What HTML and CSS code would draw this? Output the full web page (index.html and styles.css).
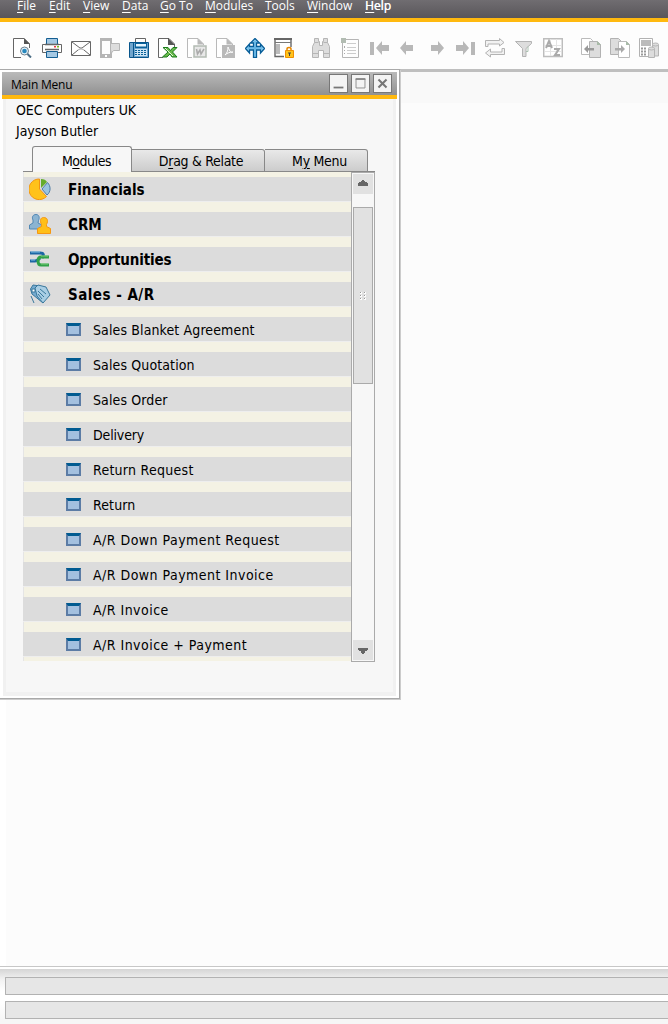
FILE: index.html
```html
<!DOCTYPE html>
<html lang="en">
<head>
<meta charset="utf-8">
<title>Main Menu</title>
<link rel="stylesheet" href="styles.css">
</head>
<body>
<nav class="menubar"><span><u>F</u>ile</span><span><u>E</u>dit</span><span><u>V</u>iew</span><span><u>D</u>ata</span><span><u>G</u>o To</span><span><u>M</u>odules</span><span><u>T</u>ools</span><span><u>W</u>indow</span><span class="help"><u>H</u>elp</span></nav>
<div class="toolbar">
  <div class="group">
    <svg viewBox="0 0 20 20"><path d="M8 19.500H.5V.5H11l5.500 5.500V10" fill="#fff" stroke="#666"/><path d="M11 0l6 6h-6z" fill="#555"/><circle cx="11.500" cy="13" r="4" fill="#e4f1f8" stroke="#6d7f8c"/><circle cx="11.500" cy="13" r="2.300" fill="#2687bd"/><path d="M14.500 16l3.500 3.500" stroke="#4b6d85" stroke-width="2"/></svg>
    <svg viewBox="0 0 20 20"><path d="M4.500.5h11V7h-11z" fill="#a4c8e3" stroke="#145e92"/><path d="M.5 6.500h19v8H.5z" fill="#fff" stroke="#666"/><path d="M3 6.500h14M3 11.500h14" stroke="#666" stroke-width="1.500"/><path d="M12 8h2v1.500h-2z" fill="#e34"/><path d="M15 8h2v1.500h-2z" fill="#7b2"/><path d="M4.500 13.500h11v6h-11z" fill="#a4c8e3" stroke="#145e92"/></svg>
    <svg viewBox="0 0 20 20" fill="none" stroke="#666"><path d="M.5 3.500h19v14H.5z" fill="#fff"/><path d="M1 4l8 6h2l8-6M1 17l6-5M19 17l-6-5"/><path d="M7 12l2-1h2l2 1" stroke="#aaa"/></svg>
    <svg viewBox="0 0 20 20"><path d="M1 1h10v18H1z" fill="#fdfdfd" stroke="#b5b5b5" stroke-width="2"/><path d="M0 16h12v4H0zM0 0h12v3H0z" fill="#b5b5b5"/><path d="M5 17h2v2H5z" fill="#fff"/><path d="M10.500 5.500h9v7h-6l-2.500 3v-3h-.5z" fill="#ddd" stroke="#b5b5b5"/></svg>
    <svg viewBox="0 0 20 20"><path d="M6.500.5h10v5h-10z" fill="#fff" stroke="#666"/><path d="M.5 4.500h19v15H.5z" fill="#70a5cd" stroke="#07558c"/><path d="M4.500 4v15" stroke="#07558c"/><path d="M6 5h12v5H6z" fill="#09619a"/><path d="M7 6h10v2.500H7z" fill="#e5f5ff"/><path d="M6 11h12v7H6z" fill="#cce4f4"/><path d="M6 12.500h11M6 14.500h11M6 16.500h11" stroke="#09619a" stroke-dasharray="2 1"/></svg>
    <svg viewBox="0 0 20 20"><path d="M5 19.500H.5V.5H11l5.500 5.500V9" fill="#fff" stroke="#666"/><path d="M10 0l7 7h-7z" fill="#555"/><path d="M5 9.500h5l2.500 3L15 9.500h4l-4.500 4.500 4.500 5h-5l-2-3-3 3H4.500l5.500-5z" fill="#69b84a" stroke="#187c1b"/><path d="M7 10l8 8" stroke="#e4f5d8"/></svg>
    <svg viewBox="0 0 20 20"><path d="M5 19.500H.5V.5H11l5.500 5.500V7" fill="#fff" stroke="#b9b9b9"/><path d="M10.500 0l6.500 6.500h-6.500z" fill="#b9b9b9"/><path d="M7 8h12v11H7z" fill="#e8e8e8" stroke="#b2bbb2" stroke-width="1.500"/><path d="M9.500 11l1 5 2.500-4 1 4 3-5" fill="none" stroke="#aaa" stroke-width="1.500"/></svg>
    <svg viewBox="0 0 20 20"><path d="M5 19.500H.5V.5H11l5.500 5.500V7" fill="#fff" stroke="#b9b9b9"/><path d="M10.500 0l6.500 6.500h-6.500z" fill="#b9b9b9"/><path d="M6 7h13v13H6z" fill="#b9b9b9"/><path d="M12 9c2 5 3 6 5 5-3 0-6 1-8 3 2-2 3-4 3-8z" fill="none" stroke="#fff"/></svg>
    <svg viewBox="0 0 20 20"><path d="M10 .5L14.500 5h-3v3.500h4V6l4 4.500-4 4.500v-3h-4v7.500h-3V12h-4v3l-4-4.500L4.500 6v2.500h4V5h-3z" fill="#8bcdf1" stroke="#075d98" stroke-width="1.300"/><path d="M10 3v15M3 10h14" stroke="#54abe0"/></svg>
    <svg viewBox="0 0 20 20"><path d="M1 1h16v17.500H1z" fill="#fff" stroke="#666" stroke-width="1.400"/><path d="M0 0h18v2H0z" fill="#666"/><path d="M1 4.500h16" stroke="#777"/><path d="M2 6h4v10H2z" fill="#bbb"/><path d="M10 9h10v11H10z" fill="#fdfdfd"/><path d="M13 13v-2c0-2 4-2 4 0v2" fill="none" stroke="#e78700" stroke-width="1.500"/><path d="M11.500 12.500h8v7h-8z" fill="#ffc31b" stroke="#ef8f00"/><path d="M14 15h3M15.500 15v3" stroke="#444"/></svg>
  </div>
  <div class="group">
    <svg viewBox="0 0 20 20" fill="#ddd" stroke="#b5b5b5"><path d="M3.500.5h4v3h1v4h3v-4h1v-3h4v4l2 4v11h-6v-7h-5v7h-6v-11l2-4z"/><path d="M1.500 15.500h6M12.500 15.500h6M3.500 4.500h4M12.500 4.500h4"/></svg>
    <svg viewBox="0 0 20 20"><path d="M2.500 1.500h16v18h-16z" fill="#fdfdfd" stroke="#b5b5b5"/><path d="M1 0h5v5H1z" fill="#b2bcb2"/><path d="M7 5.500h9M7 9.500h9M7 12.500h9M7 15.500h9" stroke="#ccc"/><path d="M4 8h1v2H4zM4 12h1v1H4zM4 15h1v1H4z" fill="#aaa"/></svg>
    <svg viewBox="0 0 20 20" fill="#b8b8b8"><path d="M1 4h4v13H1zM7 10l6-7v4h7v6h-7v4z"/></svg>
    <svg viewBox="0 0 20 20" fill="#b8b8b8"><path d="M2 10l6-7v4h7v6H8v4z"/></svg>
    <svg viewBox="0 0 20 20" fill="#b8b8b8"><path d="M17 10l-6-7v4H4v6h7v4z"/></svg>
    <svg viewBox="0 0 20 20" fill="#b8b8b8"><path d="M13 10L7 3v4H0v6h7v4zM15 4h4v13h-4z"/></svg>
    <svg viewBox="0 0 20 20" fill="#f2f2f2" stroke="#b3b3b3"><path d="M.5 8.500v-6h14v-2l4.500 4-4.500 3.500V6H3v2.500zM19.500 10.500v6h-14v2.500l-5-4 5-4V14H17v-3.500z"/></svg>
    <svg viewBox="0 0 20 20"><path d="M1.500 3.500h16v2l-5.500 5v8H8.500v-8l-7-7z" fill="#ddd" stroke="#b3b3b3"/><path d="M14 8.500v5h-2" fill="none" stroke="#abc1b1"/></svg>
    <svg viewBox="0 0 20 20"><path d="M.7.7h18.600v17.800H.7z" fill="#fff" stroke="#bdbdbd" stroke-width="1.500"/><path d="M2 7.500h16M2 13.500h16M7.500 1v17M13.500 1v17" stroke="#e5e5e5"/><path d="M3 10l3-7 3 7M4 8h5M11 11h5l-4 6h5" fill="none" stroke="#aaa" stroke-width="2"/></svg>
  </div>
  <div class="group">
    <svg viewBox="0 0 20 20"><path d="M.5.5h9l2 2v14H.5z" fill="#fff" stroke="#bbb"/><path d="M8.500 3.500h8l3 3v13h-11z" fill="#ddd" stroke="#b2b2b2"/><path d="M16 3l4 4h-4z" fill="#a8bba8"/><path d="M3 11l4-4v3h6v2.500H7V15z" fill="#999"/></svg>
    <svg viewBox="0 0 20 20"><path d="M.5.5h8l3 3v13H.5z" fill="#ddd" stroke="#b2b2b2"/><path d="M8.500 3.500h8l3 3v13h-11z" fill="#fff" stroke="#bbb"/><path d="M16 3l4 4h-4z" fill="#a8bba8"/><path d="M15 11l-4-4v3H5v2.500h6V15z" fill="#aaa"/></svg>
    <svg viewBox="0 0 20 20"><path d="M.5.5h13v18H.5z" fill="#fff" stroke="#b2b2b2"/><path d="M2 2h10v6H2z" fill="#bbb"/><path d="M2 10.500h6M2 13.500h6M2 16.500h6" stroke="#999" stroke-width="2" stroke-dasharray="2 1"/><g fill="#ddd" stroke="#b5b5b5"><path d="M13.500 7v11h6V7z"/><ellipse cx="16.500" cy="6.500" rx="3" ry="1.500"/><path d="M9.500 11v8.500h6V11z"/><ellipse cx="12.500" cy="10.500" rx="3" ry="1.500"/></g></svg>
  </div>
</div>
<main class="workspace">
  <section class="window">
    <header class="titlebar"><span class="title">Main Menu</span>
      <div class="controls">
        <svg viewBox="0 0 19 19"><path d="M4 14h11" stroke="#777" stroke-width="2"/></svg>
        <svg viewBox="0 0 19 19"><path d="M4.500 4.500h10v10h-10z" fill="none" stroke="#888"/><path d="M4 4.500h11" stroke="#888" stroke-width="2"/></svg>
        <svg viewBox="0 0 19 19"><path d="M5 5l9 9M14 5l-9 9" stroke="#777" stroke-width="2.300"/></svg>
      </div>
    </header>
    <div class="body">
      <p>OEC Computers UK</p>
      <p>Jayson Butler</p>
      <div class="tabs"><div class="tab active">M<u>o</u>dules</div><div class="tab drag">D<u>r</u>ag &amp; Relate</div><div class="tab mine">M<u>y</u> Menu</div></div>
      <div class="panel">
        <ul class="list">
          <li class="module"><svg viewBox="0 0 22 22"><path d="M10.500 1v10l7 7.500A10.300 10.300 0 1 1 10.500 1z" fill="#ffc21b" stroke="#f29412"/><path d="M12 1v9l6-6c-1-2-3-3-6-3z" fill="#65ac2b"/><path d="M18.500 4.500L13 11l5 6c4-3 4-9 .5-12.500z" fill="#9bc4df" stroke="#517ca5"/></svg><span>Financials</span></li>
          <li class="module"><svg viewBox="0 0 22 22"><path d="M7 1.500c3 0 4 3 2.500 6L9 10l4 2v4H.5v-4L4 10V7C2.500 4 4 1.500 7 1.500z" fill="#8bb4d2" stroke="#5389b5"/><path d="M14.500 4.500c4 0 5 3 3 7v2l4 2v5H8.500v-5l4-2v-2c-2-4-1-7 2-7z" fill="#ffbf19" stroke="#f59713"/></svg><span>CRM</span></li>
          <li class="module"><svg viewBox="0 0 22 22" fill="none" stroke-width="3"><path d="M1 5h10c4 0 4 2 2 5M1 13h5c2 0 3-1 5-3" stroke="#1c67a4"/><path d="M20 9h-8c-4 0-4 8 0 8h8" stroke="#31a248"/><path d="M2 4h9M2 12h4" stroke="#80bfe4" stroke-width="1"/><path d="M12 8h7M12 16h7" stroke="#7ccc7d" stroke-width="1"/></svg><span class="tight">Opportunities</span></li>
          <li class="module"><svg viewBox="0 0 22 22" stroke="#39789c"><path d="M1.500 6L4 2l7 1 5 5-2 12L3 11z" fill="#75abd0"/><path d="M6 5l3-3 8 2 4 8-7 8-6-7z" fill="#a9cee4"/><path d="M2 13l3 7M9 8l6 6M11 6l6 5M9 11l4 5" fill="none"/><path d="M3 6h3v3H3z" fill="#fff"/></svg><span class="wide">Sales - A/R</span></li>
          <li><i></i><span>Sales Blanket Agreement</span></li>
          <li><i></i><span>Sales Quotation</span></li>
          <li><i></i><span>Sales Order</span></li>
          <li><i></i><span class="tight">Delivery</span></li>
          <li><i></i><span class="roomy">Return Request</span></li>
          <li><i></i><span>Return</span></li>
          <li><i></i><span class="wide">A/R Down Payment Request</span></li>
          <li><i></i><span class="wide">A/R Down Payment Invoice</span></li>
          <li><i></i><span class="wide">A/R Invoice</span></li>
          <li><i></i><span class="wide">A/R Invoice + Payment</span></li>
        </ul>
        <div class="scrollbar">
          <svg class="arrow" viewBox="0 0 20 20" shape-rendering="crispEdges"><path d="M9 6h2v1h1v1h2v1h1v3H5V9h1V8h2V7h1z" fill="#666"/></svg>
          <div class="thumb"><svg viewBox="0 0 8 10" shape-rendering="crispEdges"><path d="M1 1h2v2H1zM5 1h2v2H5zM1 4h2v2H1zM5 4h2v2H5zM1 7h2v2H1zM5 7h2v2H5z" fill="#fff"/><path d="M1 1h1v1H1zM5 1h1v1H5zM1 4h1v1H1zM5 4h1v1H5zM1 7h1v1H1zM5 7h1v1H5z" fill="#999"/></svg></div>
          <svg class="arrow down" viewBox="0 0 20 20" shape-rendering="crispEdges"><path d="M5 8h10v2h-1v1h-2v2h-1v1H9v-1H8v-2H6v-1H5z" fill="#666"/></svg>
        </div>
      </div>
    </div>
  </section>
</main>
<footer class="status"><div class="field"></div><div class="field"></div></footer>
</body>
</html>
```
FILE: styles.css
```css
* { box-sizing: border-box; }
body { margin: 0; width: 668px; height: 1024px; overflow: hidden; background: #fdfdfd; color: #000; font-family: "DejaVu Sans Condensed", "DejaVu Sans", sans-serif; font-stretch: condensed; display: flex; flex-direction: column; }
svg { display: block; flex: none; }
u { text-decoration-thickness: 1px; text-underline-offset: 2px; }
.menubar { height: 22px; flex: none; border-bottom: 4px solid #ffb90f; background: linear-gradient(#706d71, #59565a); color: #fff; font: 12px/11px "Open Sans", sans-serif; display: grid; grid-template-columns: 32px 34px 39px 38px 45px 60px 42px 58px auto; padding-left: 17px; white-space: nowrap; }
.menubar .help { text-shadow: .3px 0 #fff; }
.toolbar { height: 47px; flex: none; padding: 16px 0 0 13px; display: flex; gap: 17px; background: #fdfdfd; }
.group { display: flex; gap: 9px; }
.group:last-child { margin-left: 1px; }
.group svg { width: 20px; height: 20px; }
.workspace { height: 897px; flex: none; background: linear-gradient(#fff, #fff) left / 6px 100% no-repeat, linear-gradient(#bfbfbf 0 3px, #f9f9f9 3px 34px, #fcfcfc 34px); }
.window { width: 401px; height: 631px; border-top: 1px solid #a9a9a9; border-right: 1px solid #ccc; border-bottom: 1px solid #ccc; padding: 2px 3px 3px 2px; background: #fff; box-shadow: inset -1px -1px #a9a9a9; }
.titlebar { height: 27px; width: 395px; background: linear-gradient(#bababa, #919191); border-bottom: 4px solid #ffb90f; display: flex; justify-content: space-between; padding: 2px 5px 0 9px; }
.title { font: 12px/21px "Open Sans", sans-serif; letter-spacing: -.2px; }
.controls { display: flex; gap: 3px; }
.controls svg { width: 19px; height: 19px; background: #f4f4f4; border: 1px solid #777; }
.body { height: 597px; width: 393px; margin-left: 1px; background: #f7f7f7; border: solid #f1f1f1; border-width: 0 3px 4px 3px; padding: 1px 18px 0 17px; }
p { margin: 0 0 0 -7px; font-size: 14px; line-height: 21px; letter-spacing: -.08px; }
.tabs { height: 26px; width: 352px; margin-top: 4px; display: flex; align-items: flex-end; padding-left: 9px; font-size: 14px; background: linear-gradient(#888, #888) bottom / 100% 1px no-repeat; }
.tab { height: 23px; border: 1px solid #888; border-left: 0; background: linear-gradient(#e9e9e9, #ccc); border-radius: 0 3px 0 0; text-align: center; line-height: 22px; letter-spacing: -.3px; padding-left: 6px; }
.tab.active { width: 100px; height: 26px; border-left: 1px solid #888; border-bottom: 0; border-radius: 3px 3px 0 0; background: #f7f7f7; line-height: 29px; padding-left: 9px; letter-spacing: -.45px; }
.tab.drag { width: 133px; }
.tab.mine { width: 103px; padding-left: 7px; }
.panel { display: flex; height: 490px; width: 352px; }
.list { list-style: none; margin: 0; padding: 5px 0 0; width: 328px; height: 489px; background: linear-gradient(#e5e5e5, #e5e5e5) left / 1px 100% no-repeat #f4f2e4; overflow: hidden; }
li { height: 25px; margin-bottom: 10px; padding-left: 43px; background: #dcdcdc; border-bottom: 1px solid #eee; display: flex; align-items: center; gap: 12px; font-size: 14px; letter-spacing: .12px; white-space: nowrap; }
li span { padding-top: 1px; }
li i { width: 15px; height: 13px; border: 2px solid #5c7ca5; border-top: 3px solid #005b91; background: #a3c0df; }
li.module { padding-left: 6px; gap: 17px; font-weight: bold; font-size: 15px; letter-spacing: 0; }
li.module span { padding-top: 2px; }
li .wide { letter-spacing: .47px; }
li .roomy { letter-spacing: .27px; }
li .tight { letter-spacing: -.15px; }
.module svg { width: 22px; height: 22px; }
.scrollbar { width: 24px; height: 490px; border: 1px solid #aaa; background: #f7f7f7; padding: 1px; display: flex; flex-direction: column; }
.arrow { width: 20px; height: 20px; background: #e1e1e1; }
.thumb { height: 177px; width: 20px; margin-top: 13px; border: 1px solid #aaa; background: #e1e1e1; display: flex; align-items: center; justify-content: center; }
.thumb svg { width: 8px; height: 10px; }
.down { margin-top: auto; }
.status { height: 58px; flex: none; border-top: 1px solid #c7c7c7; background: linear-gradient(#fff 0 2px, #d5d5d5 2px, #f1f1f1 12px, #fff 24px 36px, #f6f6f6 52px); padding: 10px 0 0 5px; }
.field { height: 18px; margin-bottom: 6px; border: 1px solid #b2b2b2; border-right: 0; border-radius: 1px 0 0 1px; background: #e6e6e6; }
```
